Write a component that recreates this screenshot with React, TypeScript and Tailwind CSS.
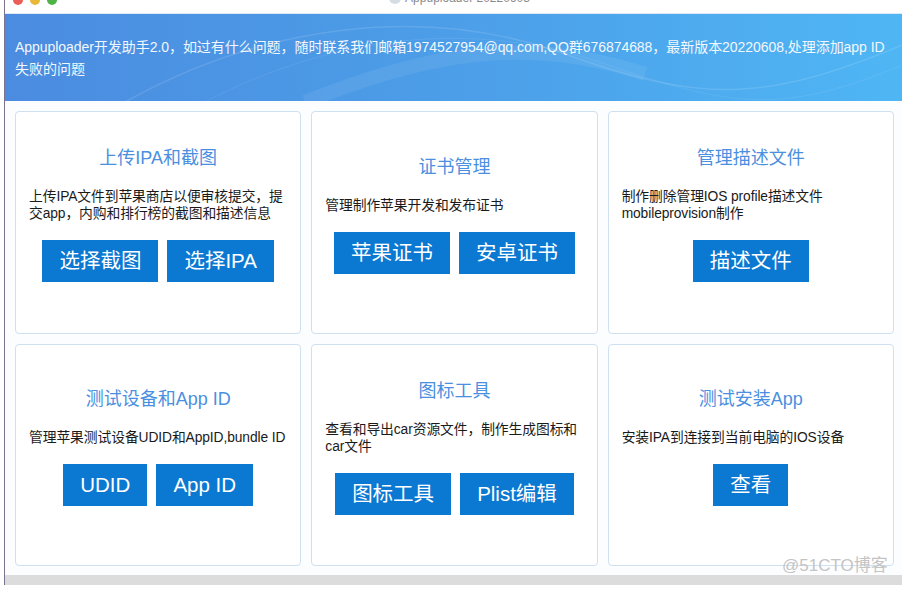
import React from "react";

const FONT = '"Liberation Sans", "Noto Sans CJK SC", sans-serif';

function Btn({ children }: { children: React.ReactNode }) {
  return (
    <div className="h-[42px] px-[17px] bg-[#0b78d1] text-white text-[20.5px] leading-[42px] whitespace-nowrap">
      {children}
    </div>
  );
}

function Card({
  title,
  lines,
  buttons,
}: {
  title: string;
  lines: string[];
  buttons: string[];
}) {
  return (
    <div className="bg-white border border-[#cfe0f0] rounded-[4px] flex flex-col items-center justify-center pb-[16px] px-[13px]">
      <div className="text-[18px] leading-[24px] text-[#4a8fe0] whitespace-nowrap">{title}</div>
      <div className="self-stretch mt-[18px] text-[13.8px] leading-[17px] text-[#1a1a1a]">
        {lines.map((l, i) => (
          <div key={i} className="whitespace-nowrap tracking-[-0.1px]">
            {l}
          </div>
        ))}
      </div>
      <div className="mt-[18px] flex gap-[9px] justify-center">
        {buttons.map((b) => (
          <Btn key={b}>{b}</Btn>
        ))}
      </div>
    </div>
  );
}

export default function App() {
  return (
    <div className="relative w-[914px] h-[598px] bg-white overflow-hidden" style={{ fontFamily: FONT }}>
      <div className="ml-[4px] w-[898px] h-[585px] border-l border-[#7b7290] flex flex-col">
        {/* title bar */}
        <div className="h-[13px] bg-white overflow-hidden flex items-start relative">
          <div className="flex gap-[7px] ml-[8px] -mt-[5px]">
            <div className="w-[10px] h-[10px] rounded-full bg-[#ec5f57]" />
            <div className="w-[10px] h-[10px] rounded-full bg-[#e8b83a]" />
            <div className="w-[10px] h-[10px] rounded-full bg-[#4fb448]" />
          </div>
          <div className="flex-1 flex justify-center items-start -mt-[10px] pr-[40px] gap-[4px] text-[12px] leading-[16px] text-[#8a8a8a]">
            <div className="w-[12px] h-[12px] rounded-full bg-[#d6dce3] mt-[2px]" />
            <span>Appuploader 20220608</span>
          </div>
        </div>
        {/* header */}
        <div className="relative h-[88px] bg-linear-to-r from-[#4b8ce0] via-[#4c9ee8] to-[#4fb6f4] border-t border-[#dde9f7] overflow-hidden">
          <svg className="absolute inset-0" width="898" height="88" viewBox="0 0 898 88">
            <path d="M120 88 C 260 10, 420 -10, 560 40 S 760 88, 900 30" stroke="white" strokeOpacity="0.12" strokeWidth="1.5" fill="none" />
            <path d="M200 88 C 330 20, 470 5, 600 50 S 780 100, 900 50" stroke="white" strokeOpacity="0.08" strokeWidth="1" fill="none" />
            <path d="M300 88 C 420 40, 520 20, 640 60" stroke="white" strokeOpacity="0.07" strokeWidth="14" fill="none" />
          </svg>
          <div className="relative pl-[10px] pt-[22px] text-[14px] leading-[22px] text-[#f2f7fd]">
            <div className="whitespace-nowrap tracking-[-0.05px]">
              Appuploader开发助手2.0，如过有什么问题，随时联系我们邮箱1974527954@qq.com,QQ群676874688，最新版本20220608,处理添加app ID
            </div>
            <div>失败的问题</div>
          </div>
        </div>
        {/* cards */}
        <div className="flex-1 bg-[#fcfdfe] pt-[10px] pb-[9px] pl-[10px] pr-[8px] grid grid-cols-3 grid-rows-2 gap-x-[10px] gap-y-[10px]">
          <Card
            title="上传IPA和截图"
            lines={["上传IPA文件到苹果商店以便审核提交，提", "交app，内购和排行榜的截图和描述信息"]}
            buttons={["选择截图", "选择IPA"]}
          />
          <Card title="证书管理" lines={["管理制作苹果开发和发布证书"]} buttons={["苹果证书", "安卓证书"]} />
          <Card
            title="管理描述文件"
            lines={["制作删除管理IOS profile描述文件", "mobileprovision制作"]}
            buttons={["描述文件"]}
          />
          <Card
            title="测试设备和App ID"
            lines={["管理苹果测试设备UDID和AppID,bundle ID"]}
            buttons={["UDID", "App ID"]}
          />
          <Card
            title="图标工具"
            lines={["查看和导出car资源文件，制作生成图标和", "car文件"]}
            buttons={["图标工具", "Plist编辑"]}
          />
          <Card title="测试安装App" lines={["安装IPA到连接到当前电脑的IOS设备"]} buttons={["查看"]} />
        </div>
        <div className="h-[10px] bg-[#dcdcdc]" />
      </div>
      <div className="absolute left-[782px] top-[553px] text-[17px] text-[#c4c4c4] whitespace-nowrap">@51CTO博客</div>
    </div>
  );
}
